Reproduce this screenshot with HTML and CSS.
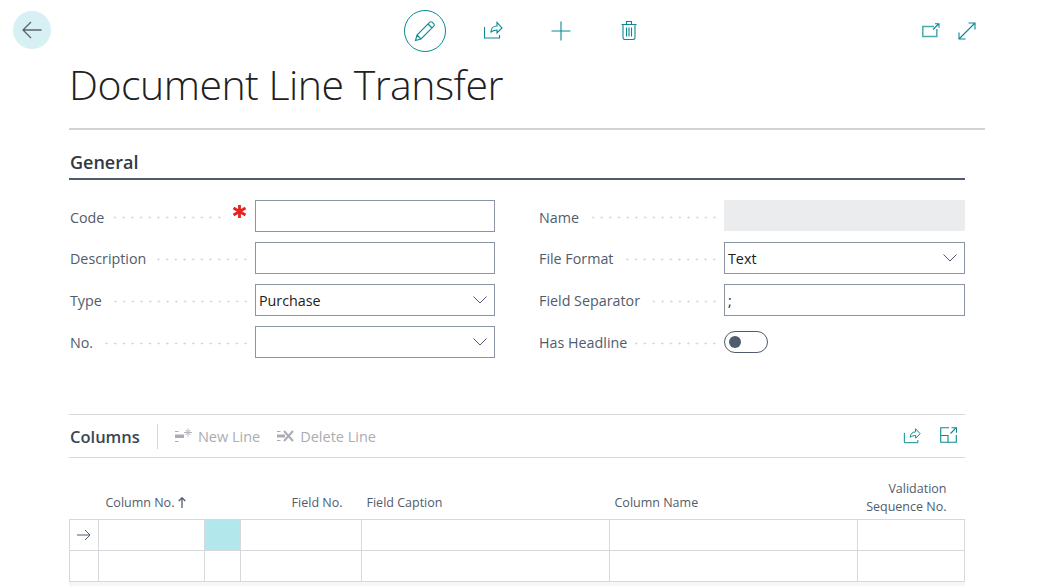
FILE: index.html
```html
<!DOCTYPE html>
<html lang="en">
<head>
<meta charset="utf-8">
<title>Document Line Transfer</title>
<link rel="stylesheet" href="styles.css">
</head>
<body>
<div class="page">
  <header class="topbar">
    <button class="back" aria-label="Back">
      <svg width="22" height="22" viewBox="0 0 22 22"><path d="M20.500 11H2M10 3l-8 8 8 8" class="ic-dark"/></svg>
    </button>
    <button class="edit" aria-label="Edit">
      <svg width="22" height="22" viewBox="0 0 22 22"><path d="M1.500 20.500 3 15 15.800 2.200a1.600 1.600 0 0 1 2.300 0l1.700 1.700a1.600 1.600 0 0 1 0 2.300L7 19zM3 15l4 4M14 4l4 4" class="ic"/></svg>
    </button>
    <svg class="tool t-share" width="20" height="18" viewBox="0 0 20 18"><path d="M1.500 6v11h15v-3M8 11c0-4 3-6 6-6V1.500l5 5.500-5 5V9c-2 0-4 .5-6 2z" class="ic"/></svg>
    <svg class="tool t-plus" width="20" height="20" viewBox="0 0 20 20"><path d="M10 .5v19M.5 10h19" class="ic"/></svg>
    <svg class="tool t-trash" width="16" height="19" viewBox="0 0 16 19"><path d="M.5 3.500h15M5.500 3.500v-3h5v3M2 3.500v13a2 2 0 0 0 2 2h8a2 2 0 0 0 2-2v-13M5.500 6.500v9M8 6.500v9M10.500 6.500v9" class="ic"/></svg>
    <svg class="tool t-pop" width="18" height="15" viewBox="0 0 18 15"><path d="M12 3.500H.8v10h14V6" class="ic-soft"/><path d="M11 6.500 16.500 1M13 .8h4v4" class="ic"/></svg>
    <svg class="tool t-expand" width="18" height="18" viewBox="0 0 18 18"><path d="M1 17 17 1M10.500 1H17v6.500M1 10.500V17h6.500" class="ic"/></svg>
  </header>

  <h1 class="title">Document Line Transfer</h1>

  <section class="general">
    <h2 class="section-title">General</h2>
    <div class="form">
      <div class="col">
        <div class="row"><span class="label">Code</span><span class="dots"></span>
          <svg class="req" width="15" height="15" viewBox="0 0 15 15"><path d="M7.500 1v13M1.500 4l12 7M13.500 4l-12 7"/></svg>
          <div class="input"></div></div>
        <div class="row"><span class="label">Description</span><span class="dots"></span><div class="input"></div></div>
        <div class="row"><span class="label">Type</span><span class="dots"></span><div class="input select"><span>Purchase</span><svg class="chev" width="14" height="8" viewBox="0 0 14 8"><path d="M.5.5 7 7 13.500.5"/></svg></div></div>
        <div class="row"><span class="label">No.</span><span class="dots"></span><div class="input select"><span></span><svg class="chev" width="14" height="8" viewBox="0 0 14 8"><path d="M.5.5 7 7 13.500.5"/></svg></div></div>
      </div>
      <div class="col col-right">
        <div class="row"><span class="label">Name</span><span class="dots"></span><div class="input readonly"></div></div>
        <div class="row"><span class="label">File Format</span><span class="dots"></span><div class="input select"><span>Text</span><svg class="chev" width="14" height="8" viewBox="0 0 14 8"><path d="M.5.5 7 7 13.500.5"/></svg></div></div>
        <div class="row"><span class="label">Field Separator</span><span class="dots"></span><div class="input"><span>;</span></div></div>
        <div class="row"><span class="label">Has Headline</span><span class="dots"></span><div class="toggle-box"><span class="toggle"><span class="knob"></span></span></div></div>
      </div>
    </div>
  </section>

  <section class="lines">
    <div class="lines-bar">
      <span class="lines-title">Columns</span>
      <span class="sep"></span>
      <span class="action">
        <svg width="19" height="16" viewBox="0 0 19 16"><path d="M1 3h3.500v1H1zM1 13h3.500v1H1z" class="ic-grey-fill"/><rect x="1" y="6.500" width="9" height="3.500" class="ic-grey-fill"/><path d="M14 .5v8M10 4.500h8M11.500 2l5 5M16.500 2l-5 5" class="ic-grey"/></svg>
        New Line
      </span>
      <span class="action">
        <svg width="19" height="16" viewBox="0 0 19 16"><path d="M1 3h3.500v1H1zM1 12h3.500v1H1z" class="ic-grey-fill"/><rect x="1" y="6.500" width="8" height="3" class="ic-grey-fill"/><path d="m8 3 9 10M17 3 8 13" class="ic-grey-bold"/></svg>
        Delete Line
      </span>
      <span class="bar-right">
        <svg width="18" height="17" viewBox="0 0 20 18"><path d="M1.500 6v11h15v-3M8 11c0-4 3-6 6-6V1.500l5 5.500-5 5V9c-2 0-4 .5-6 2z" class="ic"/></svg>
        <svg width="17" height="16" viewBox="0 0 17 16"><path d="M9 .7H.7v14.600h15.600V8M.7 8.500H8v6.800M10.500 6.500 16 1M11.500.7h5v5" class="ic"/></svg>
      </span>
    </div>
    <table class="grid">
      <colgroup><col class="c1"><col class="c2"><col class="c3"><col class="c4"><col class="c5"><col class="c6"><col class="c7"></colgroup>
      <thead>
        <tr>
          <th></th>
          <th class="th-left th-no">Column No. <svg class="sort" width="8" height="11" viewBox="0 0 8 11"><path d="M4 11V1M.7 4 4 .8 7.300 4"/></svg></th>
          <th></th>
          <th class="th-right">Field No.</th>
          <th class="th-left">Field Caption</th>
          <th class="th-left">Column Name</th>
          <th class="th-right th-seq">Validation<br>Sequence No.</th>
        </tr>
      </thead>
      <tbody>
        <tr>
          <td class="marker"><svg width="14" height="12" viewBox="0 0 14 12"><path d="M0 6h13M8 1l5 5-5 5"/></svg></td>
          <td></td><td class="active"></td><td></td><td></td><td></td><td></td>
        </tr>
        <tr><td></td><td></td><td></td><td></td><td></td><td></td><td></td></tr>
      </tbody>
    </table>
    <div class="grid-end"></div>
  </section>
</div>
</body>
</html>
```

FILE: styles.css
```css
* { box-sizing: border-box; }
html, body { margin: 0; padding: 0; background: #fff; }
body { font-family: "Open Sans", "Noto Sans", sans-serif; font-size: 14.300px; color: #505c6d; }
.page { width: 1042px; height: 586px; overflow: hidden; position: relative; }

.ic { fill: none; stroke: #0a8a93; stroke-width: 1.100; }
.ic-soft { fill: none; stroke: #4ea9b0; stroke-width: 1.500; }
.ic-dark { fill: none; stroke: #5a6470; stroke-width: 1.300; }
.ic-grey { fill: none; stroke: #b4b8be; stroke-width: 1; }
.ic-grey-bold { fill: none; stroke: #a9adb3; stroke-width: 2; }
.ic-grey-fill { fill: #a9adb3; }

.topbar { display: flex; align-items: flex-start; height: 52px; padding: 10px 0 0 13px; }
.back, .edit { padding: 0; border-radius: 50%; display: flex; align-items: center; justify-content: center; background: none; border: 0; flex: none; }
.back { width: 38px; height: 38px; background: #d6f0f3; margin-top: 1px; }
.edit { width: 42px; height: 42px; border: 1px solid #0a8a93; margin-left: 353px; }
.tool { flex: none; }
.t-share { margin: 11px 0 0 37px; }
.t-plus { margin: 11px 0 0 48px; }
.t-trash { margin: 11px 0 0 50px; }
.t-pop { margin: 13px 0 0 285px; }
.t-expand { margin: 12px 0 0 18px; }

.title { margin: 0 0 0 69px; height: 66px; font-weight: 300; font-size: 41px; line-height: 64px; color: #212121; letter-spacing: -0.500px; white-space: nowrap; }
.general { margin: 10px 0 0 69px; border-top: 2px solid #d0d4d8; width: 916px; padding-right: 20px; }
.section-title { margin: 0; height: 50px; padding: 19px 0 0 1px; font-size: 18px; line-height: 26px; font-weight: 600; color: #2f3a46; border-bottom: 2px solid #505c6d; }
.form { display: flex; padding-top: 20px; }
.col { width: 425px; margin-left: 1px; display: flex; flex-direction: column; gap: 10px; }
.col-right { margin-left: 44px; width: 426px; }
.row { display: flex; align-items: center; height: 32px; }
.label { flex: none; padding-right: 8px; white-space: nowrap; }
.row:first-child .label { position: relative; top: 1px; }
.dots { flex: 1; height: 3px; margin-right: 5px; position: relative; top: 1px; background-image: radial-gradient(circle, #cfd2d6 0.9px, transparent 1.1px); background-size: 8.700px 3px; background-position: right center; background-repeat: repeat-x; }
.req { flex: none; margin: -10px 8px 0 3px; }
.req path { fill: none; stroke: #e5241f; stroke-width: 2.800; }
.input { flex: none; width: 240px; height: 32px; border: 1px solid #8a94a3; display: flex; align-items: center; padding: 0 7px 0 3px; color: #212121; background: #fff; }
.col-right .input { width: 241px; }
.select { justify-content: space-between; }
.chev { flex: none; }
.chev path { fill: none; stroke: #505c6d; stroke-width: 1; }
.readonly { background: #ebecee; border-color: #ebecee; height: 31px; margin-top: -1px; }
.toggle-box { flex: none; width: 241px; display: flex; }
.toggle { width: 44px; height: 22px; border: 1px solid #505c6d; border-radius: 11px; display: flex; align-items: center; padding-left: 4px; }
.knob { width: 12px; height: 12px; border-radius: 50%; background: #505c6d; }

.lines { margin: 56px 0 0 69px; width: 896px; }
.lines-bar { height: 44px; border-top: 1px solid #d5d8dc; border-bottom: 1px solid #d5d8dc; display: flex; align-items: center; }
.lines-title { margin-left: 1px; font-size: 16.500px; font-weight: 600; color: #3a4654; }
.sep { width: 1px; height: 25px; background: #d5d8dc; margin: 0 16px 0 17px; }
.action { display: flex; align-items: center; gap: 5px; color: #a9adb3; margin-right: 16px; font-size: 14.500px; }
.bar-right { margin-left: auto; display: flex; align-items: center; gap: 19px; margin-right: 8px; margin-top: -2px; }
.grid { border-collapse: collapse; table-layout: fixed; width: 895px; height: 123px; }
.c1 { width: 29px; } .c2 { width: 106px; } .c3 { width: 36px; } .c4 { width: 121px; } .c5 { width: 248px; } .c6 { width: 248px; } .c7 { width: 107px; }
.grid th { font-weight: 400; font-size: 12.500px; line-height: 18px; vertical-align: bottom; padding: 0 0 7px; height: 61px; color: #505c6d; }
.th-left { text-align: left; padding-left: 5px !important; }
.th-no { padding-left: 7px !important; }
.th-right { text-align: right; padding-right: 19px !important; }
.th-seq { padding-right: 18px !important; padding-bottom: 3px !important; }
.sort { vertical-align: -1px; }
.sort path { fill: none; stroke: #505c6d; stroke-width: 1.300; }
.grid td { border: 1px solid #d5d8dc; height: 31px; padding: 0; }
.grid td.active { background: #b2e8ec; }
.marker { text-align: center; }
.marker svg { display: block; margin: 0 auto; }
.marker path { fill: none; stroke: #505c6d; stroke-width: 1; }
.grid-end { height: 6px; background: #f5f6f7; }
```
